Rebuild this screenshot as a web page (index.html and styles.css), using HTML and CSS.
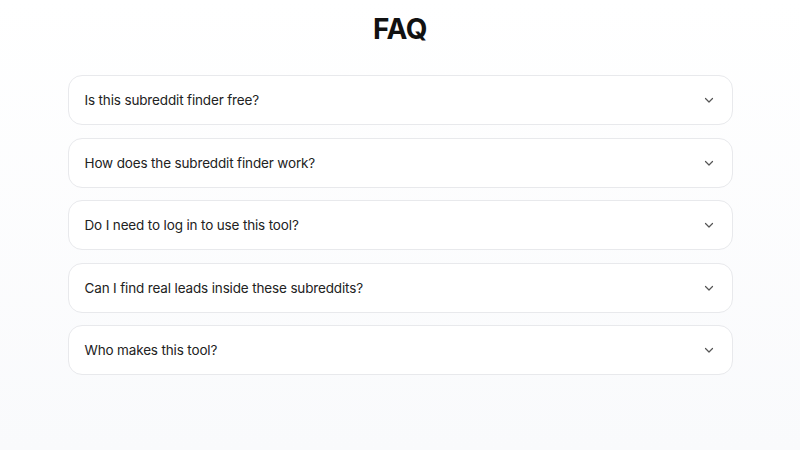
FILE: index.html
```html
<!DOCTYPE html>
<html>
<head>
<meta charset="utf-8">
<link rel="stylesheet" href="styles.css">
</head>
<body>
<main class="page">
  <h1 class="title">FAQ</h1>
  <div class="faq-list">
    <div class="faq-item"><span class="q">Is this subreddit finder free?</span><svg class="chev" viewBox="0 0 12 12" width="12" height="12"><path d="M2.5 4.5 L6 8 L9.5 4.5" fill="none" stroke="#555" stroke-width="1.2" stroke-linecap="round" stroke-linejoin="round"/></svg></div>
    <div class="faq-item"><span class="q">How does the subreddit finder work?</span><svg class="chev" viewBox="0 0 12 12" width="12" height="12"><path d="M2.5 4.5 L6 8 L9.5 4.5" fill="none" stroke="#555" stroke-width="1.2" stroke-linecap="round" stroke-linejoin="round"/></svg></div>
    <div class="faq-item"><span class="q">Do I need to log in to use this tool?</span><svg class="chev" viewBox="0 0 12 12" width="12" height="12"><path d="M2.5 4.5 L6 8 L9.5 4.5" fill="none" stroke="#555" stroke-width="1.2" stroke-linecap="round" stroke-linejoin="round"/></svg></div>
    <div class="faq-item"><span class="q">Can I find real leads inside these subreddits?</span><svg class="chev" viewBox="0 0 12 12" width="12" height="12"><path d="M2.5 4.5 L6 8 L9.5 4.5" fill="none" stroke="#555" stroke-width="1.2" stroke-linecap="round" stroke-linejoin="round"/></svg></div>
    <div class="faq-item"><span class="q">Who makes this tool?</span><svg class="chev" viewBox="0 0 12 12" width="12" height="12"><path d="M2.5 4.5 L6 8 L9.5 4.5" fill="none" stroke="#555" stroke-width="1.2" stroke-linecap="round" stroke-linejoin="round"/></svg></div>
  </div>
</main>
</body>
</html>
```

FILE: styles.css
```css
html, body {
  margin: 0;
  height: 100%;
}
body {
  background: linear-gradient(180deg, #ffffff 0%, #f9fafc 100%);
  font-family: Inter, "Noto Sans", sans-serif;
  color: #1f1f1f;
}
.page {
  padding-top: 9px;
  display: flex;
  flex-direction: column;
  align-items: center;
}
.title {
  margin: 0;
  font-size: 28px;
  line-height: 40px;
  font-weight: 700;
  color: #111;
  letter-spacing: -0.5px;
}
.faq-list {
  margin-top: 26px;
  width: 665px;
  display: flex;
  flex-direction: column;
  gap: 12.5px;
}
.faq-item {
  box-sizing: border-box;
  height: 50px;
  background: #fff;
  border: 1px solid #e8e9ec;
  border-radius: 14px;
  display: flex;
  align-items: center;
  justify-content: space-between;
  padding: 0 17px 0 16px;
}
.q {
  font-size: 13.5px;
  letter-spacing: -0.15px;
  color: #222;
}
.chev {
  display: block;
}
```
